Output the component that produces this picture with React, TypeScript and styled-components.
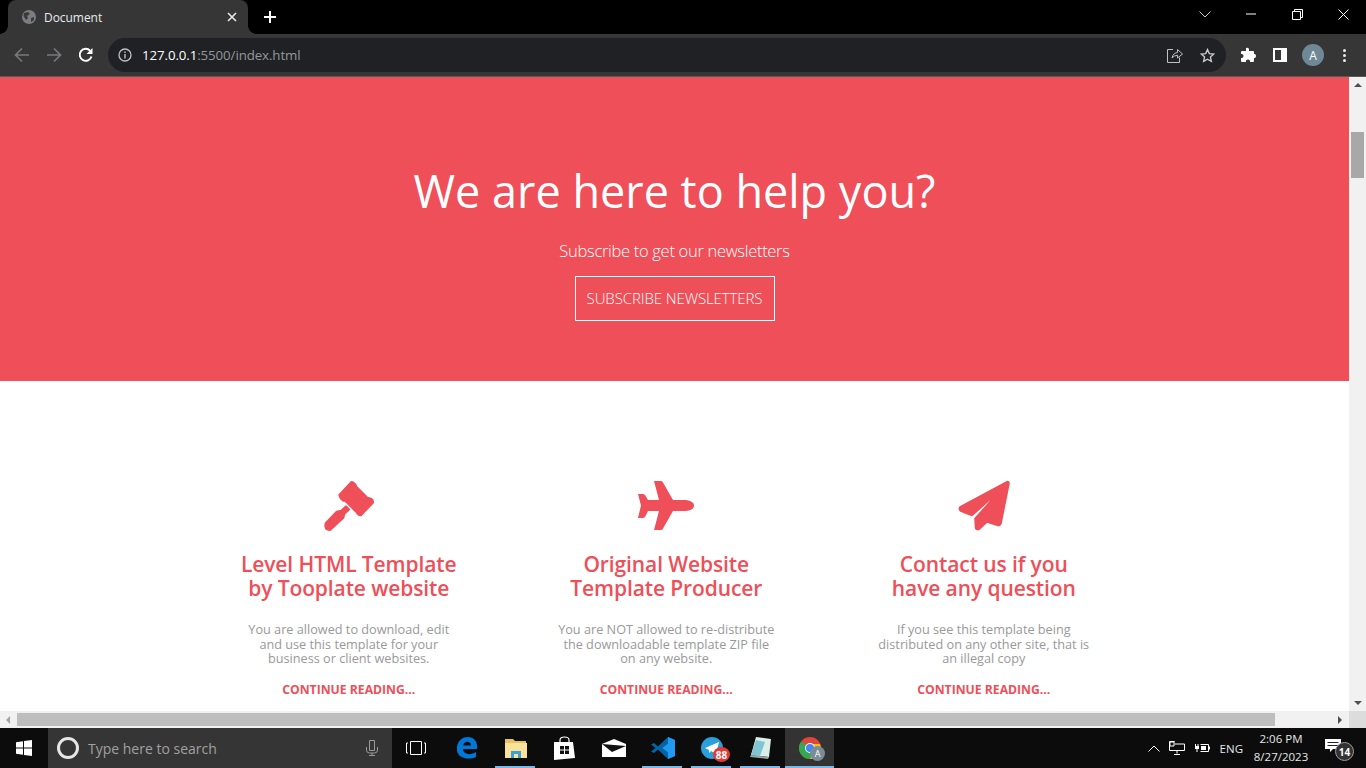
import React from "react";
import styled, { createGlobalStyle } from "styled-components";

const RED = "#ee4f58";
const UI_FONT = `"Open Sans", "Noto Sans", "Liberation Sans", sans-serif`;

const GlobalStyle = createGlobalStyle`
  html, body {
    margin: 0;
    padding: 0;
    width: 1366px;
    height: 768px;
    overflow: hidden;
    background: #000;
  }
  * { box-sizing: border-box; }
`;

const features = [
  {
    icon: "hammer",
    title: ["Level HTML Template", "by Tooplate website"],
    text: ["You are allowed to download, edit", "and use this template for your", "business or client websites."],
  },
  {
    icon: "plane",
    title: ["Original Website", "Template Producer"],
    text: ["You are NOT allowed to re-distribute", "the downloadable template ZIP file", "on any website."],
  },
  {
    icon: "paper",
    title: ["Contact us if you", "have any question"],
    text: ["If you see this template being", "distributed on any other site, that is", "an illegal copy"],
  },
];

function FeatureIcon({ name }: { name: string }) {
  if (name === "hammer") {
    return (
      <svg width="60" height="54" viewBox="18 8 60 54">
        <g fill={RED} stroke={RED} strokeWidth="1.5" strokeLinejoin="round">
          <path d="M38 25 L50 12 Q52 11 55 15 L55.500 16.500 L66.500 27.500 L70 28.500 Q73 30 72 33 L60 45.500 Q58 46 56 43.500 L56 43 L44 31 L42 31 Q39 29 38 25 Z" />
          <path d="M45 36 L48.500 39.500 L43.500 44 L42.500 48 L29.500 60 Q27 60.500 25 59 Q23.500 56 24.500 53 L35.500 41.500 L40 40.500 Z" />
        </g>
      </svg>
    );
  }
  if (name === "plane") {
    return (
      <svg width="60" height="54" viewBox="16 8 60 54">
        <path
          fill={RED}
          d="M34 11 H41 Q42.500 11 43 12.500 L53 30 H66 Q74 31 74 35.500 Q74 40 66 41 H53 L43 58.500 Q42.500 60 41 60 H34 L39 41 H28 L25 47 Q24 48 22.500 48 H18 L21 35.500 L18 24 H22.500 Q24 24 25 25 L28 30 H39 Z"
        />
      </svg>
    );
  }
  return (
    <svg width="60" height="54" viewBox="18 8 60 54">
      <path
        fill={RED}
        stroke={RED}
        strokeWidth="1.5"
        strokeLinejoin="round"
        d="M71.500 11.500 Q73 11.500 73 13.500 L65 53.500 Q64 56 62 55.500 L51 52 L43 59.500 Q40 60 39.500 58 L39 48.500 L56 29.500 Q55 28.500 54 29.500 L36 45.500 L24.500 41 Q22.500 39 24 37 Z"
      />
    </svg>
  );
}

export default function App() {
  return (
    <Screen>
      <GlobalStyle />
      <TabStrip>
        <Tab>
          <svg width="16" height="16" viewBox="0 0 16 16">
            <circle cx="8" cy="8" r="7" fill="#7b7d80" />
            <path d="M3 4 L7 3 L9 5 L6 7 L7 9 L5 11 L2.500 7 Z M10 9 L13 8 L13 11 L10 13 Z" fill="#3a3a3b" />
          </svg>
          <TabTitle>Document</TabTitle>
          <svg width="10" height="10" viewBox="0 0 10 10">
            <path d="M1 1 L9 9 M9 1 L1 9" stroke="#e8eaed" strokeWidth="1.6" />
          </svg>
        </Tab>
        <NewTab>
          <svg width="12" height="12" viewBox="0 0 12 12">
            <path d="M6 0 V12 M0 6 H12" stroke="#fff" strokeWidth="2" />
          </svg>
        </NewTab>
        <WindowButtons>
          <WindowButton>
            <svg width="12" height="7" viewBox="0 0 12 7">
              <path d="M.500 .500 L6 6 L11.500 .500" stroke="#c9c9c9" fill="none" />
            </svg>
          </WindowButton>
          <WindowButton>
            <svg width="10" height="2" viewBox="0 0 10 2">
              <path d="M0 1 H10" stroke="#fff" />
            </svg>
          </WindowButton>
          <WindowButton>
            <svg width="11" height="11" viewBox="0 0 11 11">
              <path d="M.500 2.500 H8.500 V10.500 H.500 Z M2.500 2.500 V.500 H10.500 V8.500 H8.500" stroke="#fff" fill="none" />
            </svg>
          </WindowButton>
          <WindowButton>
            <svg width="11" height="11" viewBox="0 0 11 11">
              <path d="M.500 .500 L10.500 10.500 M10.500 .500 L.500 10.500" stroke="#fff" />
            </svg>
          </WindowButton>
        </WindowButtons>
      </TabStrip>

      <Toolbar>
        <NavIcons>
          <svg width="16" height="16" viewBox="0 0 16 16">
            <path d="M15 8 H2 M8 1.500 L1.500 8 L8 14.500" stroke="#77797c" strokeWidth="1.700" fill="none" />
          </svg>
          <svg width="16" height="16" viewBox="0 0 16 16">
            <path d="M1 8 H14 M8 1.500 L14.500 8 L8 14.500" stroke="#77797c" strokeWidth="1.700" fill="none" />
          </svg>
          <svg width="16" height="16" viewBox="0 0 16 16">
            <path d="M13.500 9.500 A6 6 0 1 1 12.200 3.800" stroke="#fff" strokeWidth="1.900" fill="none" />
            <path d="M14.500 1 V7 H8.500 Z" fill="#fff" />
          </svg>
        </NavIcons>
        <AddressBar>
          <svg width="14" height="14" viewBox="0 0 14 14">
            <circle cx="7" cy="7" r="6" stroke="#bdc1c6" strokeWidth="1.300" fill="none" />
            <path d="M7 6 V10.500 M7 3.500 V5" stroke="#bdc1c6" strokeWidth="1.400" />
          </svg>
          <Url>
            <b>127.0.0.1</b>:5500/index.html
          </Url>
          <svg width="16" height="15" viewBox="0 0 16 15">
            <path
              d="M6 1.500 H.500 V14.500 H12.500 V9.500 M5 10 Q6 5 10.500 4.500 V1.500 L15.500 6 L10.500 10 V7.200 Q7 7.500 5 10 Z"
              stroke="#bdc1c6"
              fill="none"
            />
          </svg>
          <svg width="15" height="15" viewBox="0 0 24 24">
            <path
              d="M12 2.500 L14.900 9 L22 9.700 L16.700 14.500 L18.200 21.500 L12 17.900 L5.800 21.500 L7.300 14.500 L2 9.700 L9.100 9 Z"
              stroke="#c8cbcf"
              strokeWidth="2.200"
              fill="none"
            />
          </svg>
        </AddressBar>
        <ToolIcons>
          <svg width="16" height="16" viewBox="0 0 16 16">
            <path
              fill="#fff"
              d="M6 1 Q8 0 9 2 V4 H13 Q14 4 14 5 V7 Q16 6.500 16 9 Q16 11.500 14 11 V14 Q14 15 13 15 H10 Q10.500 12.500 8 12.500 Q5.500 12.500 6 15 H2 Q1 15 1 14 V11 Q3.500 11.500 3.500 9 Q3.500 6.500 1 7 V5 Q1 4 2 4 H6 Z"
            />
          </svg>
          <PanelIcon />
          <Avatar>A</Avatar>
          <MenuDots>
            <i />
            <i />
            <i />
          </MenuDots>
        </ToolIcons>
      </Toolbar>

      <Viewport>
        <PageRow>
          <Page>
            <Hero>
              <HeroTitle>We are here to help you?</HeroTitle>
              <HeroText>Subscribe to get our newsletters</HeroText>
              <HeroButton>SUBSCRIBE NEWSLETTERS</HeroButton>
            </Hero>
            <Features>
              {features.map((f) => (
                <Feature key={f.icon}>
                  <IconWrap>
                    <FeatureIcon name={f.icon} />
                  </IconWrap>
                  <FeatureTitle>
                    {f.title[0]}
                    <br />
                    {f.title[1]}
                  </FeatureTitle>
                  <FeatureText>
                    {f.text[0]}
                    <br />
                    {f.text[1]}
                    <br />
                    {f.text[2]}
                  </FeatureText>
                  <ReadMore>CONTINUE READING...</ReadMore>
                </Feature>
              ))}
            </Features>
          </Page>
          <VScroll>
            <ArrowUp />
            <VThumb />
            <ArrowDown />
          </VScroll>
        </PageRow>
        <HScroll>
          <ArrowLeft />
          <HThumb />
          <ArrowRight />
          <Corner />
        </HScroll>
      </Viewport>

      <Taskbar>
        <StartButton>
          <svg width="16" height="16" viewBox="0 0 16 16">
            <path fill="#fff" d="M0 2.300 L7 1.300 V7.500 H0 Z M8 1.100 L16 0 V7.500 H8 Z M0 8.500 H7 V14.700 L0 13.700 Z M8 8.500 H16 V16 L8 14.900 Z" />
          </svg>
        </StartButton>
        <SearchBox>
          <Cortana />
          <SearchText>Type here to search</SearchText>
          <svg width="12" height="16" viewBox="0 0 12 16">
            <path d="M3.500 .500 H8.500 V10.500 H3.500 Z M.500 7 V10 Q.500 13 3.500 13 H8.500 Q11.500 13 11.500 10 V7 M6 13 V15.500 M3 15.500 H9" stroke="#9a9a9a" fill="none" />
          </svg>
        </SearchBox>
        <TaskViewSlot>
          <svg width="20" height="14" viewBox="0 0 20 14">
            <path d="M4.500 .500 H15.500 V13.500 H4.500 Z M2 2 H.500 V12 H2 M18 2 H19.500 V12 H18" stroke="#fff" fill="none" />
          </svg>
        </TaskViewSlot>
        <TaskSlot>
          <svg width="22" height="22" viewBox="0 0 22 22">
            <path
              fill="#0078d7"
              d="M1 10 C2 3 7 0 12 0 C18 0 22 5 21 12 H7 C7 17 14 19 20 15 V20 C13 23 3 22 1 14 Z M7 8.500 H15 C15 3.500 8 3.500 7 8.500 Z"
            />
          </svg>
        </TaskSlot>
        <TaskSlot $running>
          <svg width="22" height="20" viewBox="0 0 22 20">
            <path fill="#e8c25b" d="M0 1 H8 L10 3 H21 V6 H0 Z" />
            <path fill="#fbe29a" d="M0 5 H22 V20 H0 Z" />
            <path fill="#3aa0d8" d="M6 20 V13 H16 V20 H13 V16 H9 V20 Z" />
          </svg>
        </TaskSlot>
        <TaskSlot>
          <svg width="21" height="24" viewBox="0 0 21 24">
            <path d="M6 6 V4 Q6 1 10.500 1 Q15 1 15 4 V6" stroke="#fff" strokeWidth="1.200" fill="none" />
            <path fill="#fff" d="M0 6 H19 L21 22 L0 24 Z" />
            <path fill="#111" d="M6 10 H10 V13.500 H6 Z M11 10 H15 V13.500 H11 Z M6 14.500 H10 V18 H6 Z M11 14.500 H15 V18 H11 Z" />
          </svg>
        </TaskSlot>
        <TaskSlot>
          <svg width="24" height="18" viewBox="0 0 24 18">
            <path fill="#fff" d="M0 5 L12 0 L24 5 L24 18 H0 Z" />
            <path fill="#111" d="M0 5 L24 7 L10 13 Z" />
          </svg>
        </TaskSlot>
        <TaskSlot $running>
          <svg width="24" height="24" viewBox="0 0 24 24">
            <path fill="#0065a9" d="M17 1 L24 4 V20 L17 23 L7 13.500 L3 17 L0 15.500 L4.500 12 L0 8.500 L3 7 L7 10.500 Z M17 7.500 L11 12 L17 16.500 Z" />
            <path fill="#1f9cf0" d="M17 1 L24 4 V20 L17 23 Z M17 7.500 L11 12 L17 16.500 Z" fillRule="evenodd" />
          </svg>
        </TaskSlot>
        <TaskSlot $running>
          <svg viewBox="0 0 22 22" width="22" height="22">
            <circle cx="11" cy="11" r="11" fill="#2b9fd9" />
            <path fill="#fff" d="M4 11 L18 5 L15 17 L10 14 L8 16 V13 Z" />
          </svg>
          <CountBadge>88</CountBadge>
        </TaskSlot>
        <TaskSlot $running>
          <svg width="22" height="24" viewBox="0 0 22 24">
            <path fill="#dcefe9" d="M6 1 L21 3 L19 21 L1 19 Z" />
            <path fill="#7fc5d3" d="M1 19 L6 4 L15 6 L10 20 Z" />
            <path fill="#9aa7a5" d="M1 19 L19 21 L18 23 L0 21 Z" />
          </svg>
        </TaskSlot>
        <ChromeSlot>
          <svg width="22" height="22" viewBox="0 0 22 22">
            <circle cx="11" cy="11" r="11" fill="#e0453a" />
            <path fill="#34a853" d="M0 11 A11 11 0 0 0 11 22 L14 14 L5 6 L2 5 A11 11 0 0 0 0 11 Z" />
            <path fill="#fbbc05" d="M11 7 H21 A11 11 0 0 1 11 22 L15 13 Z" />
            <circle cx="11" cy="11" r="5" fill="#fff" />
            <circle cx="11" cy="11" r="4" fill="#4285f4" />
          </svg>
          <ChromeAvatar>A</ChromeAvatar>
        </ChromeSlot>

        <Tray>
          <svg width="12" height="7" viewBox="0 0 12 7">
            <path d="M.500 6.500 L6 1 L11.500 6.500" stroke="#fff" fill="none" />
          </svg>
          <svg width="16" height="14" viewBox="0 0 16 14">
            <path d="M.500 .500 H5.500 V1 M.500 .500 V9.500 H15.500 V3 H5.500 M8 9.500 V12.500 M5 13.500 H11" stroke="#fff" fill="none" />
            <path d="M1 1 H5 V5 H1 Z" stroke="#fff" fill="none" />
          </svg>
          <svg width="16" height="10" viewBox="0 0 16 10">
            <path fill="#fff" d="M1 1 H2 V3 H3.500 V1 H4.500 V3 H5 V6 H3.500 V9 H2.500 V6 H1 Z" />
            <path d="M6.500 1.500 H14.500 V8.500 H6.500" stroke="#fff" fill="none" />
            <path fill="#fff" d="M7 3 H12 V7 H7 Z M15 3.500 H16 V6.500 H15 Z" />
          </svg>
          <TrayLang>ENG</TrayLang>
          <Clock>
            <span>2:06 PM</span>
            <span>8/27/2023</span>
          </Clock>
          <Notify>
            <svg width="16" height="14" viewBox="0 0 16 14">
              <path fill="#fff" d="M0 0 H16 V10 H8 L5 13 V10 H0 Z" />
              <path stroke="#222" d="M2.500 3.500 H13.500 M2.500 6.500 H13.500" />
            </svg>
            <NotifyCount>14</NotifyCount>
          </Notify>
        </Tray>
      </Taskbar>
    </Screen>
  );
}

const Screen = styled.div`
  width: 1366px;
  height: 768px;
  display: flex;
  flex-direction: column;
  overflow: hidden;
  font-family: ${UI_FONT};
`;

const TabStrip = styled.div`
  height: 34px;
  flex: none;
  display: flex;
  align-items: stretch;
  padding-left: 8px;
  background: #000;
`;

const Tab = styled.div`
  position: relative;
  width: 240px;
  display: flex;
  align-items: center;
  padding: 0 11px 0 13px;
  border-radius: 8px 8px 0 0;
  background: #363637;
  svg { flex: none; }
  &::before,
  &::after {
    content: "";
    position: absolute;
    bottom: 0;
    width: 8px;
    height: 8px;
  }
  &::before {
    left: -8px;
    background: radial-gradient(circle at 0 0, #000 7.500px, #363637 8px);
  }
  &::after {
    right: -8px;
    background: radial-gradient(circle at 100% 0, #000 7.500px, #363637 8px);
  }
`;

const TabTitle = styled.span`
  flex: 1;
  margin-left: 7px;
  font-size: 12px;
  letter-spacing: -0.05px;
  color: #e8eaed;
`;

const NewTab = styled.div`
  width: 44px;
  display: flex;
  align-items: center;
  justify-content: center;
`;

const WindowButtons = styled.div`
  margin-left: auto;
  display: flex;
`;

const WindowButton = styled.div`
  width: 46px;
  display: flex;
  align-items: center;
  justify-content: center;
  padding-bottom: 6px;
`;

const Toolbar = styled.div`
  height: 43px;
  flex: none;
  display: flex;
  align-items: center;
  padding: 0 0 0 14px;
  background: #363637;
  border-bottom: 1px solid #5a5a5c;
`;

const NavIcons = styled.div`
  width: 94px;
  display: flex;
  gap: 16px;
  align-items: center;
`;

const AddressBar = styled.div`
  width: 1118px;
  height: 34px;
  display: flex;
  align-items: center;
  gap: 17px;
  padding: 0 11px 0 10px;
  border-radius: 17px;
  background: #202124;
`;

const Url = styled.span`
  flex: 1;
  margin-left: -7px;
  font-size: 13.300px;
  letter-spacing: -0.1px;
  color: #94979b;
  b {
    font-weight: 400;
    color: #fff;
  }
`;

const ToolIcons = styled.div`
  flex: 1;
  display: flex;
  align-items: center;
  gap: 17px;
  padding-left: 14px;
`;

const PanelIcon = styled.div`
  width: 14px;
  height: 14px;
  border: 2px solid #fff;
  border-right-width: 6px;
`;

const Avatar = styled.div`
  width: 22px;
  height: 22px;
  margin-left: -2px;
  display: flex;
  align-items: center;
  justify-content: center;
  border-radius: 50%;
  background: #6e8896;
  color: #fff;
  font-size: 12px;
`;

const MenuDots = styled.div`
  display: flex;
  flex-direction: column;
  gap: 2px;
  margin-left: 2px;
  i {
    width: 3px;
    height: 3px;
    border-radius: 50%;
    background: #e8eaed;
  }
`;

const Viewport = styled.div`
  height: 651px;
  flex: none;
  display: flex;
  flex-direction: column;
  background: #fff;
`;

const PageRow = styled.div`
  height: 634px;
  display: flex;
`;

const Page = styled.div`
  width: 1349px;
  overflow: hidden;
`;

const Hero = styled.section`
  height: 304px;
  display: flex;
  flex-direction: column;
  align-items: center;
  padding-top: 81px;
  background: ${RED};
  color: #fff;
`;

const HeroTitle = styled.h1`
  margin: 0;
  font-size: 45px;
  line-height: 66px;
  font-weight: 400;
`;

const HeroText = styled.p`
  margin: 15px 0 0;
  font-size: 16.500px;
  line-height: 24px;
  font-weight: 300;
  letter-spacing: -0.3px;
`;

const HeroButton = styled.div`
  width: 200px;
  height: 45px;
  margin-top: 13px;
  padding-bottom: 2px;
  display: flex;
  align-items: center;
  justify-content: center;
  border: 1px solid #fff;
  font-size: 15px;
  letter-spacing: -0.1px;
  font-weight: 300;
`;

const Features = styled.section`
  display: grid;
  grid-template-columns: repeat(3, 317.500px);
  justify-content: start;
  padding: 97px 0 0 190px;
`;

const Feature = styled.article`
  display: flex;
  flex-direction: column;
  align-items: center;
  text-align: center;
`;

const IconWrap = styled.div`
  height: 54px;
  display: flex;
  justify-content: center;
`;

const FeatureTitle = styled.h3`
  margin: 20px 0 0;
  font-size: 21px;
  line-height: 24px;
  font-weight: 600;
  color: ${RED};
  letter-spacing: -0.1px;
`;

const FeatureText = styled.p`
  margin: 22px 0 0;
  font-size: 12.700px;
  line-height: 14.500px;
  color: #999;
`;

const ReadMore = styled.a`
  margin-top: 16px;
  font-size: 12.200px;
  line-height: 16px;
  font-weight: 700;
  color: ${RED};
`;

const VScroll = styled.div`
  width: 17px;
  display: flex;
  flex-direction: column;
  align-items: center;
  background: #f1f1f1;
`;

const VThumb = styled.div`
  width: 13px;
  height: 46px;
  margin-top: 45px;
  background: #a8a8a8;
`;

const ArrowUp = styled.i`
  margin-top: 6px;
  border: 4px solid transparent;
  border-top: 0;
  border-bottom: 4px solid #505050;
`;

const ArrowDown = styled.i`
  margin-top: auto;
  margin-bottom: 6px;
  border: 4px solid transparent;
  border-bottom: 0;
  border-top: 4px solid #505050;
`;

const HScroll = styled.div`
  height: 17px;
  display: flex;
  align-items: center;
  background: #f1f1f1;
`;

const ArrowLeft = styled.i`
  margin-left: 6px;
  border: 4px solid transparent;
  border-left: 0;
  border-right: 4px solid #a3a3a3;
`;

const HThumb = styled.div`
  width: 1258px;
  height: 13px;
  margin-left: 7px;
  background: #bebebe;
`;

const ArrowRight = styled.i`
  margin-left: 63px;
  border: 4px solid transparent;
  border-right: 0;
  border-left: 4px solid #505050;
`;

const Corner = styled.div`
  width: 17px;
  height: 17px;
  margin-left: auto;
  background: #dcdcdc;
`;

const Taskbar = styled.footer`
  height: 40px;
  flex: none;
  display: flex;
  align-items: stretch;
  background: #0c0c0d;
  color: #fff;
`;

const StartButton = styled.div`
  width: 48px;
  display: flex;
  align-items: center;
  justify-content: center;
`;

const SearchBox = styled.div`
  width: 344px;
  display: flex;
  align-items: center;
  padding: 0 14px 0 9px;
  background: #353535;
`;

const Cortana = styled.div`
  width: 22px;
  height: 22px;
  border: 3px solid #e6e6e6;
  border-radius: 50%;
`;

const SearchText = styled.span`
  flex: 1;
  margin-left: 9px;
  font-size: 14px;
  color: #a0a0a0;
`;

const TaskViewSlot = styled.div`
  width: 50px;
  display: flex;
  align-items: center;
  justify-content: center;
  padding-right: 3px;
`;

const TaskSlot = styled.div<{ $running?: boolean }>`
  position: relative;
  width: 49px;
  display: flex;
  align-items: center;
  justify-content: center;
  &::after {
    content: "";
    display: ${(p) => (p.$running ? "block" : "none")};
    position: absolute;
    left: 4px;
    right: 5px;
    bottom: 0;
    height: 2px;
    background: #76b9ed;
  }
`;

const CountBadge = styled.span`
  position: absolute;
  right: 6px;
  bottom: 6px;
  width: 17px;
  height: 15px;
  display: flex;
  align-items: center;
  justify-content: center;
  border-radius: 50%;
  background: #e53935;
  font-size: 10px;
  font-weight: 700;
`;

const ChromeSlot = styled(TaskSlot)`
  background: #333;
  &::after {
    display: block;
    left: 0;
    right: 0;
  }
`;

const ChromeAvatar = styled.span`
  position: absolute;
  right: 9px;
  bottom: 7px;
  width: 15px;
  height: 15px;
  display: flex;
  align-items: center;
  justify-content: center;
  border-radius: 50%;
  background: #7b8c98;
  font-size: 9px;
`;

const Tray = styled.div`
  margin-left: auto;
  display: flex;
  align-items: center;
  gap: 9px;
  padding-right: 14px;
`;

const TrayLang = styled.span`
  margin-left: 1px;
  font-size: 11.500px;
  color: #e6e6e6;
`;

const Clock = styled.div`
  display: flex;
  flex-direction: column;
  align-items: center;
  width: 60px;
  margin-left: -1px;
  font-size: 11.500px;
  line-height: 18px;
  color: #e6e6e6;
`;

const Notify = styled.div`
  position: relative;
  width: 30px;
  height: 24px;
  margin-left: 2px;
  display: flex;
  padding-top: 3px;
  svg { margin-left: 3px; }
`;

const NotifyCount = styled.span`
  position: absolute;
  right: -2px;
  bottom: -1px;
  width: 19px;
  height: 19px;
  display: flex;
  align-items: center;
  justify-content: center;
  border-radius: 50%;
  border: 1.500px solid #9a9a9a;
  background: #333;
  font-size: 10px;
  font-weight: 700;
`;
